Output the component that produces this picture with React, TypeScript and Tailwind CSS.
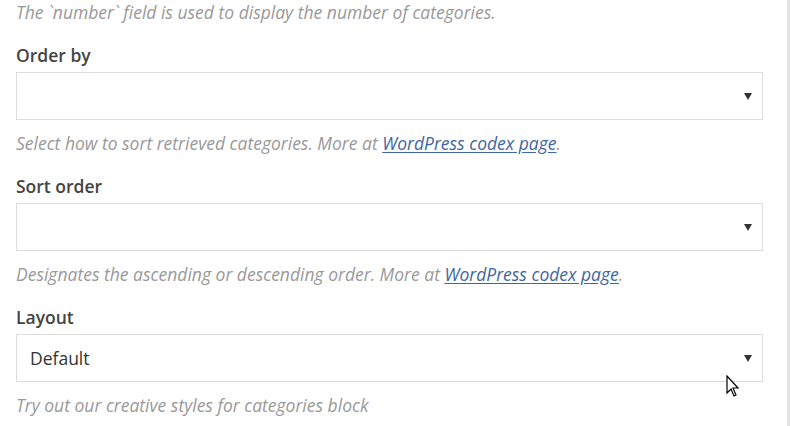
import React from "react";

type Field = {
  label: string;
  value: string;
  help: string;
  link?: boolean;
};

const fields: Field[] = [
  { label: "Order by", value: "", help: "Select how to sort retrieved categories. More at ", link: true },
  { label: "Sort order", value: "", help: "Designates the ascending or descending order. More at ", link: true },
  { label: "Layout", value: "Default", help: "Try out our creative styles for categories block" },
];

const Caret = () => (
  <svg width="8" height="7" viewBox="0 0 8 7" className="shrink-0">
    <polygon points="0,0 8,0 4,7" fill="#333" />
  </svg>
);

const Help = ({ text, link }: { text: string; link?: boolean }) => (
  <p className="italic text-[17.5px] leading-6 text-[#999] whitespace-nowrap">
    {text}
    {link && (
      <>
        <a href="#" className="text-[#3f66a0] underline underline-offset-2">WordPress codex page</a>.
      </>
    )}
  </p>
);

export default function App() {
  return (
    <div
      className="relative w-[790px] h-[426px] overflow-hidden bg-white border-r-[3px] border-[#e4e4e4] pl-4 pr-6"
      style={{ fontFamily: '"Open Sans", "Liberation Sans", sans-serif' }}
    >
      <Help text="The `number` field is used to display the number of categories." />
      {fields.map((f) => (
        <div key={f.label} className="flex flex-col mt-[19px]">
          <label className="text-[17.5px] leading-6 font-semibold text-[#444]">{f.label}</label>
          <div className="mt-[5px] mb-[11px] h-12 flex items-center justify-between border border-[#ddd] bg-white pl-[13px] pr-[10px]">
            <span className="text-[17.5px] text-[#333]">{f.value}</span>
            <Caret />
          </div>
          <Help text={f.help} link={f.link} />
        </div>
      ))}
      {/* mouse pointer */}
      <svg className="absolute left-[726px] top-[375px]" width="14" height="24" viewBox="0 0 14 24">
        <path d="M1 1 L1 18 L5 14 L8 21 L10 20 L7 13 L12 13 Z" fill="#fff" stroke="#000" strokeWidth="1.2" strokeLinejoin="miter" />
      </svg>
    </div>
  );
}
